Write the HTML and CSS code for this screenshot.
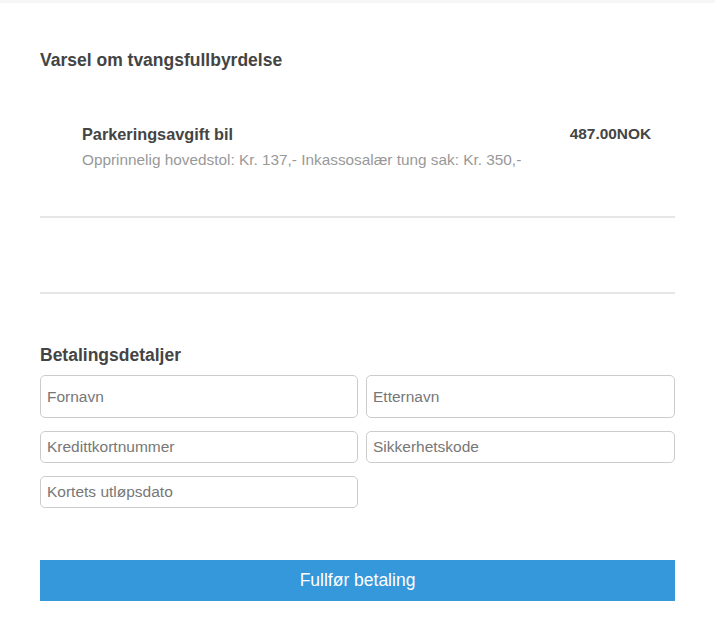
FILE: index.html
```html
<!DOCTYPE html>
<html lang="no">
<head>
<meta charset="utf-8">
<title>Varsel om tvangsfullbyrdelse</title>
<link rel="stylesheet" href="styles.css">
</head>
<body>
<div class="topbar"></div>
<main class="page">
  <h2 class="heading">Varsel om tvangsfullbyrdelse</h2>
  <div class="item">
    <div class="item-text">
      <div class="item-title">Parkeringsavgift bil</div>
      <div class="item-desc">Opprinnelig hovedstol: Kr. 137,- Inkassosalær tung sak: Kr. 350,-</div>
    </div>
    <div class="item-price">487.00NOK</div>
  </div>
  <hr class="divider first">
  <hr class="divider second">
  <h2 class="heading pay">Betalingsdetaljer</h2>
  <form class="form">
    <input class="field tall" type="text" placeholder="Fornavn">
    <input class="field tall" type="text" placeholder="Etternavn">
    <input class="field" type="text" placeholder="Kredittkortnummer">
    <input class="field" type="text" placeholder="Sikkerhetskode">
    <input class="field" type="text" placeholder="Kortets utløpsdato">
  </form>
  <button class="submit" type="button">Fullfør betaling</button>
</main>
</body>
</html>
```
FILE: styles.css
```css
html, body {
  margin: 0;
  padding: 0;
  background: #fff;
  font-family: "Liberation Sans", Arial, sans-serif;
}
.topbar {
  height: 3px;
  background: #f6f6f6;
}
.page {
  padding: 0 40px;
}
.heading {
  margin: 0;
  padding-top: 45px;
  font-size: 17.5px;
  line-height: 24px;
  font-weight: bold;
  color: #444;
}
.item {
  display: flex;
  justify-content: space-between;
  padding: 51px 24px 0 42px;
}
.item-title {
  font-size: 16.3px;
  line-height: 22px;
  font-weight: bold;
  color: #444;
}
.item-desc {
  margin-top: 5px;
  font-size: 15.35px;
  line-height: 20px;
  color: #999;
}
.item-price {
  font-size: 15.4px;
  line-height: 22px;
  font-weight: bold;
  color: #444;
}
.divider {
  margin: 0;
  border: 0;
  border-top: 2px solid #e6e6e6;
}
.divider.first {
  margin-top: 46px;
}
.divider.second {
  margin-top: 74px;
}
.heading.pay {
  padding-top: 49px;
}
.form {
  display: grid;
  grid-template-columns: 318px 1fr;
  column-gap: 8px;
  row-gap: 13px;
  margin-top: 8px;
}
.field {
  box-sizing: border-box;
  height: 32px;
  margin: 0;
  padding: 0 6px;
  border: 1px solid #ccc;
  border-radius: 5px;
  font-family: "Liberation Sans", Arial, sans-serif;
  font-size: 15.5px;
  color: #333;
  background: #fff;
}
.field.tall {
  height: 43px;
}
.field::placeholder {
  color: #777;
}
.submit {
  display: block;
  width: 100%;
  height: 41px;
  margin-top: 52px;
  border: 0;
  background: #3498db;
  color: #fff;
  font-family: "Liberation Sans", Arial, sans-serif;
  font-size: 17.5px;
}
```
